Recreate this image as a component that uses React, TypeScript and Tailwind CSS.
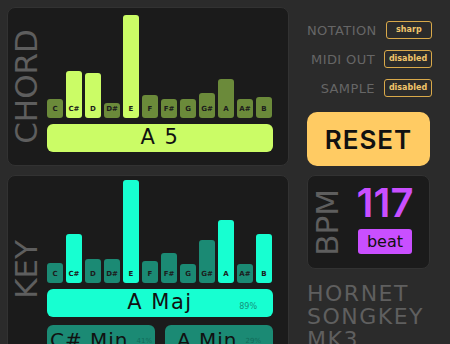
import React from "react";

const NOTES = ["C", "C#", "D", "D#", "E", "F", "F#", "G", "G#", "A", "A#", "B"];
const CHORD_H = [19, 47, 45, 15, 103, 23, 19, 19, 25, 39, 19, 21];
const CHORD_ON = [false, true, true, false, true, false, false, false, false, false, false, false];
const KEY_H = [20, 49, 24, 24, 103, 22, 30, 19, 43, 63, 19, 49];
const KEY_ON = [false, true, false, false, true, false, false, false, false, true, false, true];

function Bars({ heights, on, bright, dim }: { heights: number[]; on: boolean[]; bright: string; dim: string }) {
  return (
    <div className="flex h-[103px] items-end gap-[3px]">
      {NOTES.map((n, i) => (
        <div
          key={n}
          className="flex w-[16px] items-end justify-center rounded-[3px] pb-[5px] text-[7px] font-bold leading-none text-[#1c1c1c]"
          style={{ height: heights[i], backgroundColor: on[i] ? bright : dim }}
        >
          {n}
        </div>
      ))}
    </div>
  );
}

function Side({ label }: { label: string }) {
  return (
    <div className="flex w-[39px] items-center justify-center">
      <div className="rotate-180 text-[31px] leading-none text-[#5e5e5e] [writing-mode:vertical-rl] pl-[3px]">
        {label}
      </div>
    </div>
  );
}

function Setting({ label, value }: { label: string; value: string }) {
  return (
    <div className="flex h-[18px] items-center justify-end gap-[9px]">
      <span className="text-[13px] leading-none tracking-[0.4px] text-[#666666]">{label}</span>
      <span className="flex h-[18px] w-[48px] items-center justify-center rounded-[3px] border-[1.5px] border-[#d9a94a] text-[8px] font-bold text-[#f0c46a]">
        {value}
      </span>
    </div>
  );
}

export default function App() {
  return (
    <div
      className="flex h-[344px] w-[450px] gap-[18px] overflow-hidden bg-[#2b2b2b] pl-[7px] pt-[7px]"
      style={{ fontFamily: '"DejaVu Sans", sans-serif' }}
    >
      <div className="flex w-[282px] shrink-0 flex-col gap-[9px]">
        {/* CHORD panel */}
        <div className="flex h-[159px] shrink-0 rounded-[8px] border border-[#323232] bg-[#1b1b1b]">
          <Side label="CHORD" />
          <div className="flex w-[226px] flex-col gap-[6px] pt-[7px]">
            <Bars heights={CHORD_H} on={CHORD_ON} bright="#cbfc66" dim="#6b8a3a" />
            <div className="flex h-[28px] items-center justify-center rounded-[6px] bg-[#cbfc66] text-[21px] tracking-[1.5px] text-[#111111]">
              A 5
            </div>
          </div>
        </div>
        {/* KEY panel */}
        <div className="flex h-[188px] shrink-0 rounded-[8px] border border-[#323232] bg-[#1b1b1b]">
          <Side label="KEY" />
          <div className="flex w-[226px] flex-col pt-[4px]">
            <Bars heights={KEY_H} on={KEY_ON} bright="#17ffd1" dim="#1b8a74" />
            <div className="relative mt-[6px] flex h-[28px] items-center justify-center rounded-[6px] bg-[#17ffd1] text-[21px] tracking-[1.5px] text-[#111111]">
              A Maj
              <span className="absolute right-[16px] top-[12px] text-[8px] tracking-normal text-[#14937a]">89%</span>
            </div>
            <div className="mt-[8px] flex gap-[10px]">
              <div className="flex h-[30px] w-[108px] items-center justify-center gap-[8px] rounded-[6px] bg-[#1b8a74]">
                <span className="text-[20px] tracking-[1px] text-[#111111]">C# Min</span>
                <span className="pt-[2px] text-[7px] text-[#116b59]">41%</span>
              </div>
              <div className="flex h-[30px] w-[108px] items-center justify-center gap-[8px] rounded-[6px] bg-[#1b8a74]">
                <span className="text-[20px] tracking-[1px] text-[#111111]">A Min</span>
                <span className="pt-[2px] text-[7px] text-[#116b59]">29%</span>
              </div>
            </div>
          </div>
        </div>
      </div>

      {/* Right column */}
      <div className="flex w-[125px] shrink-0 flex-col pt-[14px]">
        <div className="flex flex-col gap-[11px]">
          <Setting label="NOTATION" value="sharp" />
          <Setting label="MIDI OUT" value="disabled" />
          <Setting label="SAMPLE" value="disabled" />
        </div>
        <button
          className="mt-[15px] flex h-[54px] w-[123px] shrink-0 items-center justify-center rounded-[10px] bg-[#ffcb63] text-[26px] font-semibold tracking-[1px] text-[#111111]"
          style={{ fontFamily: "Inter, sans-serif" }}
        >
          RESET
        </button>
        <div className="mt-[9px] flex h-[94px] w-[123px] shrink-0 rounded-[8px] border border-[#323232] bg-[#1b1b1b]">
          <div className="flex w-[40px] items-center justify-center">
            <div className="rotate-180 text-[31px] leading-none text-[#5e5e5e] [writing-mode:vertical-rl] pl-[2px]">
              BPM
            </div>
          </div>
          <div className="flex flex-1 flex-col items-center pt-[7px] pr-[7px]">
            <div
              className="text-[40px] font-semibold leading-[40px] text-[#c94fff]"
              style={{ fontFamily: "Inter, sans-serif" }}
            >
              117
            </div>
            <div className="mt-[6px] flex h-[25px] w-[54px] items-center justify-center rounded-[3px] bg-[#c94fff] text-[16px] leading-none text-[#111111]">
              beat
            </div>
          </div>
        </div>
        <div className="mt-[13px] shrink-0 text-[22px] leading-[23px] tracking-[1.5px] text-[#5f5f5f]">
          HORNET
          <br />
          SONGKEY
          <br />
          MK3
        </div>
      </div>
    </div>
  );
}
